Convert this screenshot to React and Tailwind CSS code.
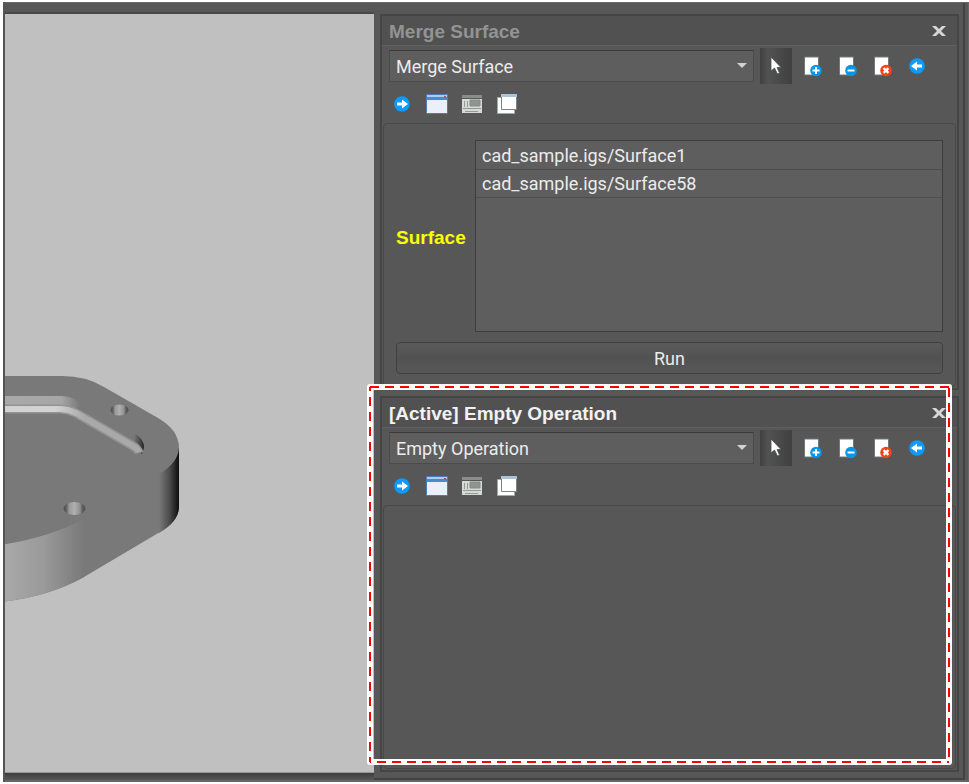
import { useState } from 'react'

const operations = ['Merge Surface', 'Empty Operation']

function CursorIcon() {
  return (
    <svg width="20" height="22" viewBox="0 0 20 22" aria-hidden="true">
      <path d="M5 2v14l3.500-3 3 6 2-1-2.500-5.500h4z" fill="#fff" stroke="#4a5256" strokeWidth="0.8" />
    </svg>
  )
}

function PageIcon({ type }) {
  return (
    <svg width="20" height="22" viewBox="0 0 20 22" aria-hidden="true">
      <path d="M2.500 2h14v18h-14z" fill="#fff" stroke="#6d7a7c" />
      <circle cx="14" cy="15.500" r="5.800" fill={type === 'delete' ? '#f4431c' : '#0795e6'} />
      {type === 'add' && <path d="M14 12v7M10.500 15.500h7" stroke="#fff" strokeWidth="2" />}
      {type === 'remove' && <path d="M10.500 15.500h7" stroke="#fff" strokeWidth="2" />}
      {type === 'delete' && <path d="m11.600 13.100 4.800 4.800m0-4.800-4.800 4.800" stroke="#fff" strokeWidth="2.200" />}
    </svg>
  )
}

function ArrowIcon({ left }) {
  return (
    <svg width="16" height="16" viewBox="0 0 16 16" aria-hidden="true">
      <circle cx="8" cy="8" r="7.8" fill="#0a9bff" />
      <path
        d={left ? 'M2 8l6-4.5v3h5v3H8v3z' : 'M14 8L8 3.500v3H3v3h5v3z'}
        fill="#fff"
      />
    </svg>
  )
}

function WindowIcon() {
  return (
    <svg width="22" height="20" viewBox="0 0 22 20" aria-hidden="true">
      <rect x="0.5" y="0.5" width="21" height="19" rx="1" fill="#ebeff9" stroke="#4d79bd" />
      <path d="M1 1h20v2H1z" fill="#a9cdf0" />
      <path d="M1 3h20v3H1z" fill="#4a8ad0" />
      <path d="M18 2h2v2h-2z" fill="#e3453a" />
    </svg>
  )
}

function FormIcon() {
  return (
    <svg width="20" height="20" viewBox="0 0 20 20" aria-hidden="true">
      <path d="M0 1h20v3H0z" fill="#8b8b8b" />
      <path d="M0 5h20v14H0z" fill="#d5dad7" />
      <path d="M8 6h10v6H8z" fill="#929292" stroke="#858a88" />
      <path d="M2 7h1v6H2zM5 7h1v6H5zM1 14h18v1H1zM3 17h13v1H3z" fill="#919a96" />
    </svg>
  )
}

function WindowsIcon() {
  return (
    <svg width="20" height="20" viewBox="0 0 20 20" aria-hidden="true">
      <path d="M0.500 3.500h17v16h-17z" fill="#fff" stroke="#a2aaa8" />
      <path d="M4.500 0.500h15v15h-15z" fill="#fff" stroke="#7b8482" />
      <path d="M4 0h16v3H4z" fill="#a9c4d6" />
    </svg>
  )
}

function ToolButton({ label, children }) {
  return (
    <button type="button" aria-label={label} className="flex h-9 w-[35px] items-center justify-center">
      {children}
    </button>
  )
}

function Toolbar({ operation }) {
  const [value, setValue] = useState(operation)

  return (
    <div className="pt-0.5 pb-px">
      <div className="flex items-center pr-[23px] pl-[7px]">
        <div className="relative min-w-0 flex-1">
          <select
            aria-label="Operation"
            value={value}
            onChange={(e) => setValue(e.target.value)}
            className="block h-8 w-full appearance-none border border-[#4b4b4b] border-t-[#3c3c3c] bg-[#5e5e5e] pt-0.5 pl-1.5 text-lg text-[#ececec]"
          >
            {operations.map((name) => (
              <option key={name}>{name}</option>
            ))}
          </select>
          <svg className="pointer-events-none absolute top-3 right-1.5" width="12" height="8" viewBox="0 0 12 8" aria-hidden="true">
            <path d="M1 1h10L6 6z" fill="#d2d2d2" />
          </svg>
        </div>
        <button
          type="button"
          aria-label="Select"
          className="mr-0.5 ml-1.5 flex h-9 w-8 items-center justify-center bg-linear-to-r from-[#404040] from-0% via-[#525252] via-25% to-[#404040]"
        >
          <CursorIcon />
        </button>
        <ToolButton label="Add item"><PageIcon type="add" /></ToolButton>
        <ToolButton label="Remove item"><PageIcon type="remove" /></ToolButton>
        <ToolButton label="Clear items"><PageIcon type="delete" /></ToolButton>
        <ToolButton label="Previous"><ArrowIcon left /></ToolButton>
      </div>
      <div className="flex items-center pt-0.5 pl-0.5">
        <ToolButton label="Next"><ArrowIcon /></ToolButton>
        <ToolButton label="Window"><WindowIcon /></ToolButton>
        <ToolButton label="Form"><FormIcon /></ToolButton>
        <ToolButton label="Windows"><WindowsIcon /></ToolButton>
      </div>
    </div>
  )
}

function Panel({ title, operation, active, children }) {
  return (
    <section className="flex flex-1 flex-col border-2 border-[#454545] bg-[#575757]">
      <header className="flex h-[30px] items-center justify-between border-b border-[#5f5f5f] bg-[#515151] pr-2.5 pl-[7px]">
        <h2
          className={
            active
              ? 'pt-0.5 font-[Liberation_Sans,sans-serif] text-[19px] font-bold text-[#f2f2f2]'
              : 'pt-0.5 font-[Liberation_Sans,sans-serif] text-[19px] font-bold text-[#939393]'
          }
        >
          {title}
        </h2>
        <button type="button" aria-label="Close" className="flex h-5 w-4 items-center justify-center">
          <svg width="14" height="12" viewBox="0 0 14 12" aria-hidden="true">
            <path d="M0 1h4l3 3 3-3h4L9 6l5 5h-4L7 8l-3 3H0l5-5z" fill="#d6d6d6" />
          </svg>
        </button>
      </header>
      <Toolbar operation={operation} />
      <div className="mx-px mb-px flex-1 rounded border border-[#484848]">{children}</div>
    </section>
  )
}

function ModelView() {
  return (
    <svg className="absolute inset-0 h-full w-full" aria-label="CAD model">
      <defs>
        <linearGradient id="front" gradientUnits="userSpaceOnUse" x1="5" y1="0" x2="84" y2="0">
          <stop offset="0" stopColor="#a9a9a9" />
          <stop offset="0.5" stopColor="#999" />
          <stop offset="1" stopColor="#797979" />
        </linearGradient>
        <linearGradient id="corner" gradientUnits="userSpaceOnUse" x1="159" y1="0" x2="179" y2="0">
          <stop offset="0" stopColor="#797979" />
          <stop offset="0.5" stopColor="#4e4e4e" />
          <stop offset="1" stopColor="#0c0c0c" />
        </linearGradient>
        <linearGradient id="hole">
          <stop offset="0" stopColor="#4c4c4c" />
          <stop offset="0.15" stopColor="#666" />
          <stop offset="0.25" stopColor="#999" />
          <stop offset="0.5" stopColor="#afafaf" />
          <stop offset="0.75" stopColor="#909090" />
          <stop offset="0.85" stopColor="#606060" />
          <stop offset="1" stopColor="#4c4c4c" />
        </linearGradient>
        <linearGradient id="wall" gradientUnits="userSpaceOnUse" x1="5" y1="0" x2="80" y2="0">
          <stop offset="0" stopColor="#a9a9a9" />
          <stop offset="0.75" stopColor="#a6a6a6" />
          <stop offset="1" stopColor="#797979" />
        </linearGradient>
        <linearGradient id="fillet" gradientUnits="userSpaceOnUse" x1="55" y1="0" x2="85" y2="0">
          <stop offset="0" stopColor="#d2d2d2" />
          <stop offset="1" stopColor="#a9a9a9" />
        </linearGradient>
        <linearGradient id="notch" gradientUnits="userSpaceOnUse" x1="134" y1="0" x2="144" y2="0">
          <stop offset="0" stopColor="#797979" />
          <stop offset="1" stopColor="#262626" />
        </linearGradient>
      </defs>
      <g transform="translate(-5 -14)">
        <path
          d="M0 376H62Q86 376 104 387L158 418Q179 430 179 448V508Q178 522 160 532L84 577Q48 597 0 602Z"
          fill="#797979"
        />
        <path d="M159 474Q178 463 179 448V508Q178 522 159 533Z" fill="url(#corner)" />
        <path d="M0 545Q48 538 84 519V577Q48 597 0 602Z" fill="url(#front)" />
        <path d="M0 396H62Q79 397 79 407L70 413H0Z" fill="url(#wall)" />
        <path d="M134 433Q145 440 144 448L142 454 134 446Z" fill="url(#notch)" />
        <path d="M0 409H60Q68 409 76 413L133 446Q138 449 139 453" fill="none" stroke="#939393" strokeWidth="9" />
        <path d="M0 409H60Q68 409 76 413L133 446Q138 449 139 452" fill="none" stroke="url(#fillet)" strokeWidth="6" />
        <ellipse cx="119.500" cy="410" rx="9" ry="5.500" fill="url(#hole)" />
        <ellipse cx="74.500" cy="508.500" rx="11" ry="6.500" fill="url(#hole)" />
      </g>
    </svg>
  )
}

// Dashed callout drawn over the active panel
function Highlight() {
  return (
    <div className="pointer-events-none absolute -top-[9px] right-2.5 bottom-2.5 -left-2.5">
      <svg className="block h-full w-full overflow-visible" aria-hidden="true">
        <rect width="100%" height="100%" fill="none" stroke="#fff" strokeWidth="6" strokeLinejoin="round" />
        <g stroke="#f00" strokeWidth="2" strokeDasharray="9 6">
          <line x1="0" y1="0" x2="100%" y2="0" />
          <line x1="100%" y1="0" x2="100%" y2="100%" strokeDashoffset="-1" />
          <line x1="0" y1="100%" x2="100%" y2="100%" strokeDashoffset="8" />
          <line x1="0" y1="0" x2="0" y2="100%" strokeDashoffset="5" />
        </g>
      </svg>
    </div>
  )
}

export default function App() {
  const surfaces = ['cad_sample.igs/Surface1', 'cad_sample.igs/Surface58']

  return (
    <div className="flex min-h-screen bg-white pt-0.5 pb-0.5 pl-[3px] font-[Roboto,sans-serif] text-lg text-[#ececec]">
      <div className="grid flex-1 grid-cols-[369fr_595fr] border-l-2 border-[#555] bg-[#575757]">
        <main className="flex flex-col">
          <div className="h-3 border-t border-b-2 border-t-[#666] border-b-[#484848]" />
          <div className="relative flex-1 overflow-hidden border-b border-[#999] bg-[#c0c0c0]">
            <ModelView />
          </div>
          <div className="h-[9px] border-b-2 border-[#666] bg-linear-to-b from-[#3e3e3e] to-[#575757]" />
        </main>

        <aside className="flex border-t border-b-2 border-t-[#666] border-b-[#666]">
          <div className="flex flex-1 flex-col border-r-2 border-b-2 border-[#424242] pt-[11px] pr-1 pb-1.5 pl-1.5">
            <div className="flex">
              <Panel title="Merge Surface" operation="Merge Surface">
                <div className="px-3 pt-4 pb-3">
                  <div className="flex items-center">
                    <span
                      id="surface-label"
                      className="w-[79px] pt-1 font-[Liberation_Sans,sans-serif] text-[19px] font-bold text-[#ff0]"
                    >
                      Surface
                    </span>
                    <ul aria-labelledby="surface-label" className="h-48 min-w-0 flex-1 border border-[#3c3c3c] bg-[#5e5e5e] pt-px">
                      {surfaces.map((s) => (
                        <li key={s} className="h-7 truncate border-b border-[#4e4e4e] pl-1.5 leading-7">
                          {s}
                        </li>
                      ))}
                    </ul>
                  </div>
                  <button
                    type="button"
                    className="mt-2.5 block h-8 w-full rounded border border-[#404040] bg-linear-to-b from-[#5a5a5a] via-[#525252] to-[#575757] pt-0.5 leading-7"
                  >
                    Run
                  </button>
                </div>
              </Panel>
            </div>
            <div className="relative mt-1.5 flex flex-1">
              <Panel title="[Active] Empty Operation" operation="Empty Operation" active />
              <Highlight />
            </div>
          </div>
          <div className="w-1 border-r border-[#666]" />
        </aside>
      </div>
    </div>
  )
}
